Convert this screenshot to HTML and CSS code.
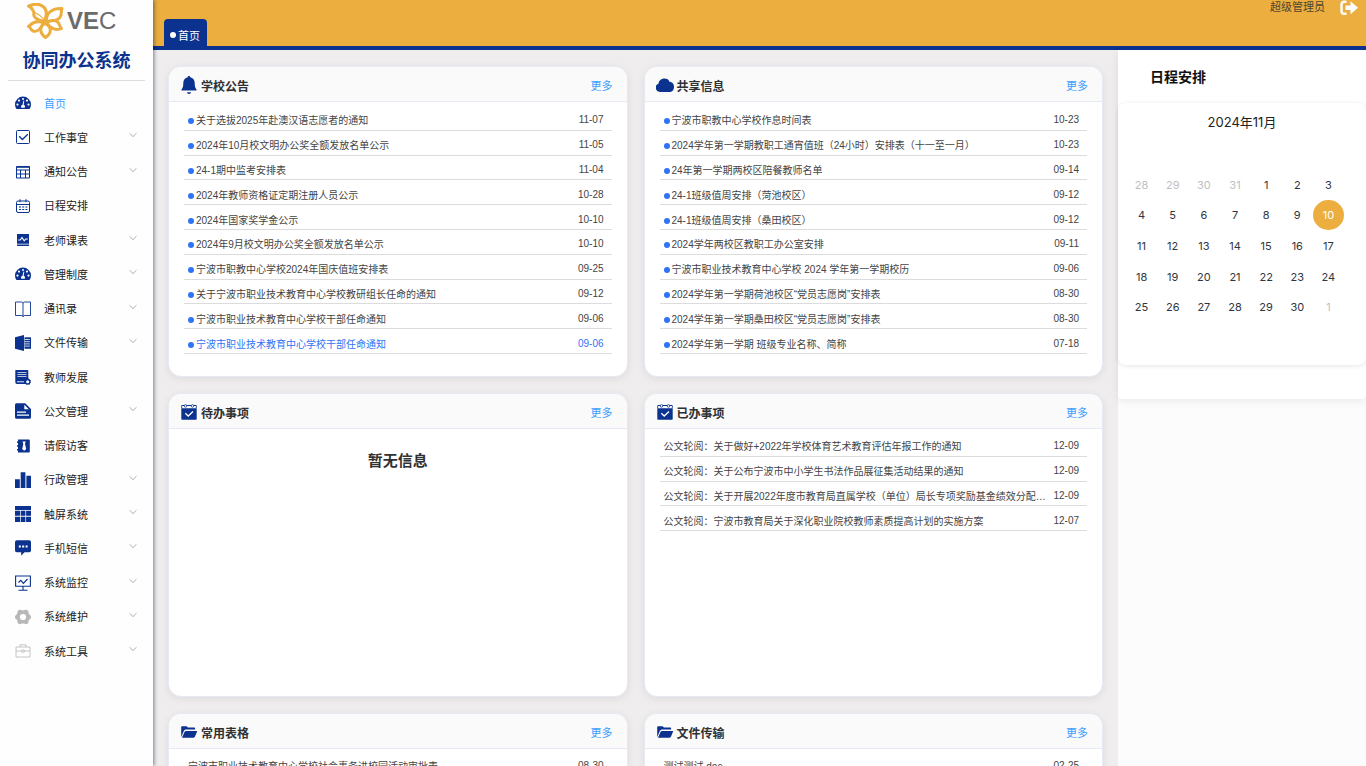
FILE: index.html
```html
<!DOCTYPE html>
<html lang="zh-CN">
<head>
<meta charset="utf-8">
<meta name="viewport" content="width=device-width, initial-scale=1">
<title>协同办公系统</title>
<link rel="stylesheet" href="styles.css">
</head>
<body>
<svg class="sprite" aria-hidden="true">
  <symbol id="chevron" viewBox="0 0 8 8"><path d="M.5 2.200 4 5.600 7.500 2.200" fill="none" stroke="currentColor" stroke-width=".8"/></symbol>
  <symbol id="gauge" viewBox="0 0 16 16">
    <path d="M8 1.600A8 8 0 0 0 0 9.600c0 1.500.4 2.800 1 4 .2.300.4.400.8.400h12.400c.4 0 .6-.1.800-.4.6-1.200 1-2.500 1-4A8 8 0 0 0 8 1.600z" fill="currentColor"/>
    <g fill="#fff"><circle cx="8" cy="3.900" r="1"/><circle cx="4" cy="5.600" r="1.100"/><circle cx="12" cy="5.600" r="1.100"/><circle cx="2.500" cy="9.600" r="1.100"/><circle cx="13.500" cy="9.600" r="1.100"/><path d="M8.500 5.500 9.300 5.700 8.700 9.700A2 2 0 0 1 9.600 12.800H6.400A2 2 0 0 1 7.500 9.700z"/></g>
  </symbol>
  <symbol id="calcheck" viewBox="0 0 16 16">
    <path d="M.3 4.200h15.400V15a.8.8 0 0 1-.8.800H1.100A.8.800 0 0 1 .3 15z" fill="currentColor"/>
    <path d="M.8 4.200V1.500h14.400v2.700" fill="none" stroke="currentColor"/>
    <path d="M1.300 2h13.400v1.600H1.300z" fill="#fff"/>
    <g fill="#fff" stroke="currentColor" stroke-width=".8"><circle cx="4.500" cy="1.900" r="1.300"/><circle cx="11.500" cy="1.900" r="1.300"/></g>
    <path d="M4.300 9.300 7.200 12l4.800-4.400" fill="none" stroke="#fff" stroke-width="1.300"/>
  </symbol>
  <symbol id="folder" viewBox="0 0 16 16">
    <path d="M.2 13.300V3.200c0-.7.400-1 1-1h4.300l1.500 1.300h6c.7 0 1.100.4 1.100 1v1.100H5.200c-1.200 0-2 .5-2.500 1.600z" fill="currentColor"/>
    <path d="M1 13.700 3.500 8.100c.4-.8.900-1.200 1.800-1.200h10.300c.4 0 .6.400.4.800l-2 4.900c-.3.800-.8 1.100-1.600 1.100z" fill="currentColor"/>
  </symbol>
</svg>

<div class="app">
  <aside class="sidebar">
    <div class="logo">
      <svg class="logo-mark" viewBox="0 0 37 36" aria-hidden="true">
        <g fill="#fff" stroke="#ebae3f" stroke-width="3" stroke-linejoin="round">
          <path d="M17 18.500C10 17 5.500 14 7 9.500 5.500 6 4 4 1.500 3 6 1 12 .5 16 3.500c4 3 4.500 8 1 15z"/>
          <path d="M19.500 18C19 12 23 5 35 5.500c-1 2-.5 4-1 6.500-1 5-8 7-14.500 6z"/>
          <path d="M16.500 19.500C11 17.500 6 19 1.500 23.500c2 0 2 3.500 4.500 4.500 4 1.500 8-2.500 10.500-8.500z"/>
          <path d="M19.500 19.500C25 16.500 30 17 31.500 20c1 2 1.500 4 3 5.500-5 2.500-12 0-15-6z"/>
          <path d="M18 20.500C12 24 12.500 30 18.500 34.500 25 30 25 24 18 20.500z"/>
        </g>
        <path d="M7 9.500c4 1 8 4 10.500 9" fill="none" stroke="#ebae3f" stroke-width="1.200"/>
      </svg>
      <span class="logo-text"><b>VE</b>C</span>
    </div>
    <h1 class="brand">协同办公系统</h1>
    <nav class="menu">
      <a href="#" class="menu-item active"><svg class="mi"><use href="#gauge"/></svg><span>首页</span></a>
      <a href="#" class="menu-item"><svg class="mi" viewBox="0 0 16 16"><rect x="1.500" y="1.500" width="13" height="13" rx="1" fill="none" stroke="currentColor"/><path d="m4.200 7.200 3.200 3.300 5.400-5.300" fill="none" stroke="currentColor" stroke-width="1.300"/></svg><span>工作事宜</span><svg class="chev"><use href="#chevron"/></svg></a>
      <a href="#" class="menu-item"><svg class="mi" viewBox="0 0 16 16"><path d="M1.500 2.500h13v11.500h-13zM1.500 6h13M1.500 10h13M5.500 6v8M10.500 6v8" fill="none" stroke="currentColor"/><path d="M1.500 2.500h13v1.300h-13z" fill="currentColor"/></svg><span>通知公告</span><svg class="chev"><use href="#chevron"/></svg></a>
      <a href="#" class="menu-item"><svg class="mi" viewBox="0 0 16 16"><rect x="1.500" y="3" width="13" height="11.500" rx="1.500" fill="none" stroke="currentColor"/><path d="M1.500 6.500h13M5 1.200v3M11 1.200v3" fill="none" stroke="currentColor"/><path d="M4 9h8.500M4 11.500h8.500" stroke="currentColor" stroke-width="1.200" stroke-dasharray="2 1.200"/></svg><span>日程安排</span></a>
      <a href="#" class="menu-item"><svg class="mi" viewBox="0 0 16 16"><path d="M2 2h12v9.800H2zM2 12.400h12V14H2z" fill="currentColor"/><path d="M3.300 8h2l1.700-2.500 2.200 3.300L10.800 7h2" fill="none" stroke="#fff" stroke-width="1.100"/></svg><span>老师课表</span><svg class="chev"><use href="#chevron"/></svg></a>
      <a href="#" class="menu-item"><svg class="mi"><use href="#gauge"/></svg><span>管理制度</span><svg class="chev"><use href="#chevron"/></svg></a>
      <a href="#" class="menu-item"><svg class="mi" viewBox="0 0 16 16"><path d="M.5 1h5.800c1 0 1.700.4 1.700 1.200 0-.8.700-1.200 1.700-1.200h5.800v13.500H10c-1 0-2 .2-2 1.200 0-1-1-1.200-2-1.200H.5zM8 2v13.500" fill="none" stroke="currentColor" stroke-width=".9"/></svg><span>通讯录</span><svg class="chev"><use href="#chevron"/></svg></a>
      <a href="#" class="menu-item"><svg class="mi" viewBox="0 0 16 16"><path d="M0 2.300 9 0v16l-9-2.300z" fill="currentColor"/><path d="M9.500 2.300H16v11.500H9.500z" fill="currentColor"/><path d="M9.800 4.500h5M9.800 6.700h5M9.800 8.900h5M9.800 11.100h5" stroke="#fff" stroke-width=".8"/></svg><span>文件传输</span><svg class="chev"><use href="#chevron"/></svg></a>
      <a href="#" class="menu-item"><svg class="mi" viewBox="0 0 16 16"><path d="M.8 1h11.700a.8.8 0 0 1 .8.800V10l-3 1.500.7 3.500H2a1.700 1.700 0 0 1-1.700-1.700V1.500z" fill="currentColor"/><path d="M2.500 3.500h9M2.500 5.500h9M2.500 7.500h9" stroke="#fff" stroke-width=".7"/><path d="M2 12.800h7" stroke="#fff" stroke-width=".9"/><circle cx="12.700" cy="12.700" r="2.200" fill="#fff" stroke="currentColor" stroke-width="1.300"/><circle cx="12.700" cy="12.700" r="3" fill="none" stroke="currentColor" stroke-width=".8" stroke-dasharray="1.200 1.150"/></svg><span>教师发展</span></a>
      <a href="#" class="menu-item"><svg class="mi" viewBox="0 0 16 16"><path d="M1.500.3h8.700L16 6v8.200a1.500 1.500 0 0 1-1.500 1.500h-13A1.500 1.500 0 0 1 0 14.200V1.800A1.500 1.500 0 0 1 1.500.3z" fill="currentColor"/><path d="M9.300 1.800V6.200H13.800z" fill="#fff"/><path d="M2 9.200h9M2 12.200h12" stroke="#fff" stroke-width="1.300"/></svg><span>公文管理</span><svg class="chev"><use href="#chevron"/></svg></a>
      <a href="#" class="menu-item"><svg class="mi" viewBox="0 0 16 16"><path d="M3 1.500h10.800a1 1 0 0 1 1 1v11a1 1 0 0 1-1 1H3z" fill="currentColor"/><path d="M2 4.200h2.500M2 8h2.500M2 11.800h2.500" stroke="currentColor" stroke-width="1.400"/><path d="M7.500 3.500h3.200L10 6l1.200 5-2 1.700-2-1.700 1.100-5z" fill="#fff"/></svg><span>请假访客</span></a>
      <a href="#" class="menu-item"><svg class="mi" viewBox="0 0 16 16"><path d="M0 7.300h4.800V16H0zM5.700.2h4.700V16H5.700zM11.400 3.700H16V16h-4.600z" fill="currentColor"/></svg><span>行政管理</span><svg class="chev"><use href="#chevron"/></svg></a>
      <a href="#" class="menu-item"><svg class="mi" viewBox="0 0 16 16"><path d="M0 0h16v4H0zM0 4.700h5v5H0zM5.700 4.700h4.700v5H5.700zM11.100 4.700H16v5h-4.900zM0 10.700h5V16H0zM5.700 10.700h4.700V16H5.700zM11.100 10.700H16V16h-4.900z" fill="currentColor"/></svg><span>触屏系统</span><svg class="chev"><use href="#chevron"/></svg></a>
      <a href="#" class="menu-item"><svg class="mi" viewBox="0 0 16 16"><path d="M1.800.3h12.400A1.800 1.800 0 0 1 16 2v8.500a1.800 1.800 0 0 1-1.800 1.800H9.500L6.200 15.700v-3.400H1.800A1.800 1.800 0 0 1 0 10.500V2A1.800 1.800 0 0 1 1.800.3z" fill="currentColor"/><path d="M3.800 5.600h2v2h-2zM7.200 5.600h2v2h-2zM10.600 5.600h2v2h-2z" fill="#fff"/></svg><span>手机短信</span><svg class="chev"><use href="#chevron"/></svg></a>
      <a href="#" class="menu-item"><svg class="mi" viewBox="0 0 16 16"><path d="M.6 1h14.800v10.300H.6zM8 11.300V15M3.500 15.300h9" fill="none" stroke="currentColor" stroke-width="1.100"/><path d="m3.500 7.500 2.300-2.200 2.600 3L12.500 4" fill="none" stroke="currentColor" stroke-width="1.200"/></svg><span>系统监控</span><svg class="chev"><use href="#chevron"/></svg></a>
      <a href="#" class="menu-item"><svg class="mi pale" viewBox="0 0 16 16"><path d="M4.600.8c1.100-.2 1.800.6 3.400.6s2.300-.8 3.400-.6l1.800 1c.4 1 .1 2 .9 3.200.7 1.200 1.700 1.200 1.900 2.300v1.400c-.2 1.100-1.200 1.100-1.900 2.300-.8 1.200-.5 2.200-.9 3.200l-1.800 1c-1.100.2-1.800-.6-3.400-.6s-2.300.8-3.400.6l-1.800-1c-.4-1-.1-2-.9-3.200C1.200 9.800.2 9.800 0 8.700V7.300C.2 6.200 1.200 6.200 1.900 5c.8-1.200.5-2.200.9-3.200z" fill="currentColor"/><circle cx="8" cy="8" r="3.100" fill="#fff"/></svg><span>系统维护</span><svg class="chev"><use href="#chevron"/></svg></a>
      <a href="#" class="menu-item"><svg class="mi pale" viewBox="0 0 16 16"><path d="M1 4h14v10H1zM5 4V1.800h6V4M1 8h5.800M9.200 8H15M6.800 7h2.400v2.200H6.800z" fill="none" stroke="currentColor" stroke-width=".8"/></svg><span>系统工具</span><svg class="chev"><use href="#chevron"/></svg></a>
    </nav>
  </aside>

  <div class="page">
    <header class="topbar">
      <a href="#" class="tab"><i class="tab-dot"></i>首页</a>
      <div class="user">
        <span>超级管理员</span>
        <button class="logout" aria-label="退出"><svg viewBox="0 0 18 16" aria-hidden="true"><path d="M6.500 1.800H4A2.500 2.500 0 0 0 1.500 4.300v7A2.500 2.500 0 0 0 4 13.800h2.500" fill="none" stroke="#fff" stroke-width="2.400"/><path d="M5.500 5.500h5V1.300L18 7.800l-7.500 6.500v-4.200h-5z" fill="#fff"/></svg></button>
      </div>
    </header>

    <div class="body">
      <main class="cards">
        <section class="card">
          <div class="card-head"><svg class="ci tall" viewBox="0 0 18 20"><path d="M9 1c.8 0 1.200.5 1.200 1.200 2.900.6 4.500 2.800 4.500 5.600 0 3.600.5 5.400 1.800 6.700v.9h-15v-.9c1.300-1.300 1.800-3.100 1.800-6.700 0-2.800 1.600-5 4.500-5.600C7.800 1.500 8.200 1 9 1zM7 17.200h4c-.1 1-1 1.700-2 1.700s-1.900-.7-2-1.700z" fill="currentColor"/></svg><h2>学校公告</h2><a href="#" class="more">更多</a></div>
          <ul class="list dotted">
            <li><a href="#">关于选拔2025年赴澳汉语志愿者的通知</a><time>11-07</time></li>
            <li><a href="#">2024年10月校文明办公奖全额发放名单公示</a><time>11-05</time></li>
            <li><a href="#">24-1期中监考安排表</a><time>11-04</time></li>
            <li><a href="#">2024年教师资格证定期注册人员公示</a><time>10-28</time></li>
            <li><a href="#">2024年国家奖学金公示</a><time>10-10</time></li>
            <li><a href="#">2024年9月校文明办公奖全额发放名单公示</a><time>10-10</time></li>
            <li><a href="#">宁波市职教中心学校2024年国庆值班安排表</a><time>09-25</time></li>
            <li><a href="#">关于宁波市职业技术教育中心学校教研组长任命的通知</a><time>09-12</time></li>
            <li><a href="#">宁波市职业技术教育中心学校干部任命通知</a><time>09-06</time></li>
            <li class="current"><a href="#">宁波市职业技术教育中心学校干部任命通知</a><time>09-06</time></li>
          </ul>
        </section>

        <section class="card">
          <div class="card-head"><svg class="ci" viewBox="0 0 18 16"><path d="M4.500 15A4.300 4.300 0 0 1 2.500 6.700C2.700 3.700 5.400 1.500 8.500 1.500c2.400 0 4.200 1.100 5 3.200A5.200 5.200 0 0 1 18 10c0 3-2 5-4.600 5z" fill="currentColor"/></svg><h2>共享信息</h2><a href="#" class="more">更多</a></div>
          <ul class="list dotted">
            <li><a href="#">宁波市职教中心学校作息时间表</a><time>10-23</time></li>
            <li><a href="#">2024学年第一学期教职工通宵值班（24小时）安排表（十一至一月）</a><time>10-23</time></li>
            <li><a href="#">24年第一学期两校区陪餐教师名单</a><time>09-14</time></li>
            <li><a href="#">24-1班级值周安排（菏池校区）</a><time>09-12</time></li>
            <li><a href="#">24-1班级值周安排（桑田校区）</a><time>09-12</time></li>
            <li><a href="#">2024学年两校区教职工办公室安排</a><time>09-11</time></li>
            <li><a href="#">宁波市职业技术教育中心学校 2024 学年第一学期校历</a><time>09-06</time></li>
            <li><a href="#">2024学年第一学期荷池校区“党员志愿岗”安排表</a><time>08-30</time></li>
            <li><a href="#">2024学年第一学期桑田校区“党员志愿岗”安排表</a><time>08-30</time></li>
            <li><a href="#">2024学年第一学期 班级专业名称、简称</a><time>07-18</time></li>
          </ul>
        </section>

        <section class="card short">
          <div class="card-head"><svg class="ci"><use href="#calcheck"/></svg><h2>待办事项</h2><a href="#" class="more">更多</a></div>
          <p class="empty">暂无信息</p>
        </section>

        <section class="card short">
          <div class="card-head"><svg class="ci"><use href="#calcheck"/></svg><h2>已办事项</h2><a href="#" class="more">更多</a></div>
          <ul class="list">
            <li><a href="#">公文轮阅：关于做好+2022年学校体育艺术教育评估年报工作的通知</a><time>12-09</time></li>
            <li><a href="#">公文轮阅：关于公布宁波市中小学生书法作品展征集活动结果的通知</a><time>12-09</time></li>
            <li><a href="#">公文轮阅：关于开展2022年度市教育局直属学校（单位）局长专项奖励基金绩效分配…</a><time>12-09</time></li>
            <li><a href="#">公文轮阅：宁波市教育局关于深化职业院校教师素质提高计划的实施方案</a><time>12-07</time></li>
          </ul>
        </section>

        <section class="card short">
          <div class="card-head"><svg class="ci"><use href="#folder"/></svg><h2>常用表格</h2><a href="#" class="more">更多</a></div>
          <ul class="list">
            <li><a href="#">宁波市职业技术教育中心学校社会事务进校园活动审批表</a><time>08-30</time></li>
          </ul>
        </section>

        <section class="card short">
          <div class="card-head"><svg class="ci"><use href="#folder"/></svg><h2>文件传输</h2><a href="#" class="more">更多</a></div>
          <ul class="list">
            <li><a href="#">测试测试.doc</a><time>02-25</time></li>
          </ul>
        </section>
      </main>

      <aside class="schedule">
        <div class="schedule-panel">
          <h2 class="schedule-title">日程安排</h2>
          <div class="calendar">
            <div class="month">2024年11月</div>
            <div class="days">
              <button class="out">28</button><button class="out">29</button><button class="out">30</button><button class="out">31</button><button>1</button><button>2</button><button>3</button>
              <button>4</button><button>5</button><button>6</button><button>7</button><button>8</button><button>9</button><button class="today">10</button>
              <button>11</button><button>12</button><button>13</button><button>14</button><button>15</button><button>16</button><button>17</button>
              <button>18</button><button>19</button><button>20</button><button>21</button><button>22</button><button>23</button><button>24</button>
              <button>25</button><button>26</button><button>27</button><button>28</button><button>29</button><button>30</button><button class="out">1</button>
            </div>
          </div>
        </div>
      </aside>
    </div>
  </div>
</div>
</body>
</html>
```
FILE: styles.css
```css
:root {
  --navy: #0b328f;
  --gold: #ebae3f;
  --link: #409eff;
  --dot: #2f74f5;
}

* {
  box-sizing: border-box;
}

body {
  margin: 0;
  font-family: "Liberation Sans", "Noto Sans CJK SC", sans-serif;
  font-size: 11px;
  color: #303133;
}

h1,
h2,
p,
ul {
  margin: 0;
  padding: 0;
}

a {
  color: inherit;
  text-decoration: none;
}

button {
  padding: 0;
  border: 0;
  background: none;
  color: inherit;
  font: inherit;
  cursor: pointer;
}

.sprite {
  position: absolute;
  width: 0;
  height: 0;
}

.app {
  display: flex;
  height: 100vh;
  overflow: hidden;
}

/* Sidebar */
.sidebar {
  flex: none;
  width: 153px;
  background: #fefefe;
  box-shadow: 1px 0 4px rgba(0, 10, 40, 0.5);
  z-index: 1;
}

.logo {
  display: flex;
  align-items: center;
  gap: 3px;
  height: 42px;
  padding-left: 27px;
}

.logo-mark {
  width: 37px;
  height: 36px;
}

.logo-text {
  color: #6b6b6b;
  font-size: 24px;
  line-height: 42px;
}

.brand {
  margin: 0 8px;
  height: 39px;
  border-bottom: 1px solid #dcdcdc;
  color: var(--navy);
  font-size: 18px;
  font-weight: bold;
  line-height: 38px;
  text-align: center;
}

.menu {
  display: flex;
  flex-direction: column;
  height: 76vh;
  margin-top: 5px;
}

.menu-item {
  flex: 1;
  display: flex;
  align-items: center;
  padding: 0 16px 0 15px;
  color: #222;
}

.menu-item.active {
  color: var(--link);
}

.menu-item span {
  padding-bottom: 1px;
}

.mi {
  width: 16px;
  height: 16px;
  margin-right: 13px;
  color: var(--navy);
}

.mi.pale {
  color: #b8b8b8;
}

.chev {
  width: 8px;
  height: 8px;
  margin: 0 0 4px auto;
  color: #999;
}

/* Top bar */
.page {
  flex: 1;
  min-width: 0;
  display: flex;
  flex-direction: column;
}

.topbar {
  flex: none;
  display: flex;
  justify-content: space-between;
  height: 50px;
  padding: 0 8px 0 11px;
  background: var(--gold);
  border-bottom: 4px solid var(--navy);
}

.tab {
  display: flex;
  align-items: center;
  align-self: flex-end;
  gap: 2px;
  height: 27px;
  padding: 4px 7px 0 6px;
  border-radius: 4px 4px 0 0;
  background: var(--navy);
  color: #fff;
}

.tab-dot {
  width: 6px;
  height: 6px;
  border-radius: 50%;
  background: #fff;
}

.user {
  display: flex;
  gap: 15px;
  line-height: 15px;
  color: #4f4630;
}

.logout {
  width: 18px;
  height: 16px;
}

.logout svg {
  display: block;
}

/* Content */
.body {
  flex: 1;
  min-height: 0;
  display: flex;
  background: #efedee;
}

.cards {
  flex: 1;
  min-width: 0;
  display: grid;
  grid-template-columns: repeat(2, minmax(0, 1fr));
  align-content: start;
  gap: 16px;
  padding: 16px 15px;
  overflow: hidden;
}

.card {
  min-height: 311px;
  border: 1px solid #e6eaf5;
  border-radius: 13px;
  background: #fff;
  box-shadow: 0 2px 8px rgba(0, 0, 0, 0.08);
  overflow: hidden;
}

.card.short {
  min-height: 304px;
}

.card-head {
  display: flex;
  align-items: center;
  gap: 3px;
  height: 35px;
  padding: 2px 14px 0 11px;
  border-bottom: 1px solid #e6eaf5;
  background: #fafafa;
}

.card-head h2 {
  font-size: 12px;
  font-weight: bold;
}

.ci {
  width: 18px;
  height: 16px;
  color: var(--navy);
}

.ci.tall {
  height: 20px;
}

.more {
  margin-left: auto;
  color: var(--link);
}

.list {
  display: grid;
  grid-template-columns: minmax(0, 1fr);
  grid-template-rows: repeat(10, 1fr);
  height: 248px;
  margin: 4px 15px 0;
  list-style: none;
  font-size: 10px;
  color: #444;
}

.short .list {
  margin: 3px 15px 16px;
}

.list li {
  display: flex;
  align-items: center;
  gap: 4px;
  padding: 4px 8px 0 4px;
  border-bottom: 1px solid #dcdcdc;
}

.list a {
  flex: 1;
  min-width: 0;
  overflow: hidden;
  white-space: nowrap;
  text-overflow: ellipsis;
}

.list.dotted a::before {
  content: "";
  display: inline-block;
  width: 6px;
  height: 6px;
  margin-right: 2px;
  border-radius: 50%;
  background: var(--dot);
}

.list .current {
  color: var(--dot);
}

.empty {
  padding-top: 21px;
  font-size: 15px;
  font-weight: bold;
  line-height: 22px;
  text-align: center;
}

/* Schedule */
.schedule {
  flex: none;
  width: 248px;
  background: #fcfcfc;
}

.schedule-panel {
  padding-bottom: 34px;
  border-radius: 0 0 4px 4px;
  background: #fff;
  box-shadow: 0 2px 8px rgba(0, 0, 0, 0.08);
}

.schedule-title {
  height: 53px;
  padding-left: 32px;
  color: #111;
  font-size: 14px;
  font-weight: bold;
  line-height: 54px;
}

.calendar {
  height: 262px;
  border-radius: 8px;
  box-shadow: 0 1px 5px rgba(0, 0, 0, 0.1);
  font-family: Inter, "Noto Sans CJK SC", sans-serif;
}

.month {
  height: 66px;
  font-size: 13px;
  line-height: 38px;
  text-align: center;
  color: #222;
}

.days {
  display: grid;
  grid-template-columns: repeat(7, 1fr);
  grid-template-rows: repeat(5, 1fr);
  height: 153px;
  margin: 0 22px 0 8px;
  color: #303640;
}

.days button {
  padding-top: 1px;
}

.days .out {
  color: #c0c0c0;
}

.days .today {
  border-radius: 50%;
  background: var(--gold);
  color: #fff;
}
```
